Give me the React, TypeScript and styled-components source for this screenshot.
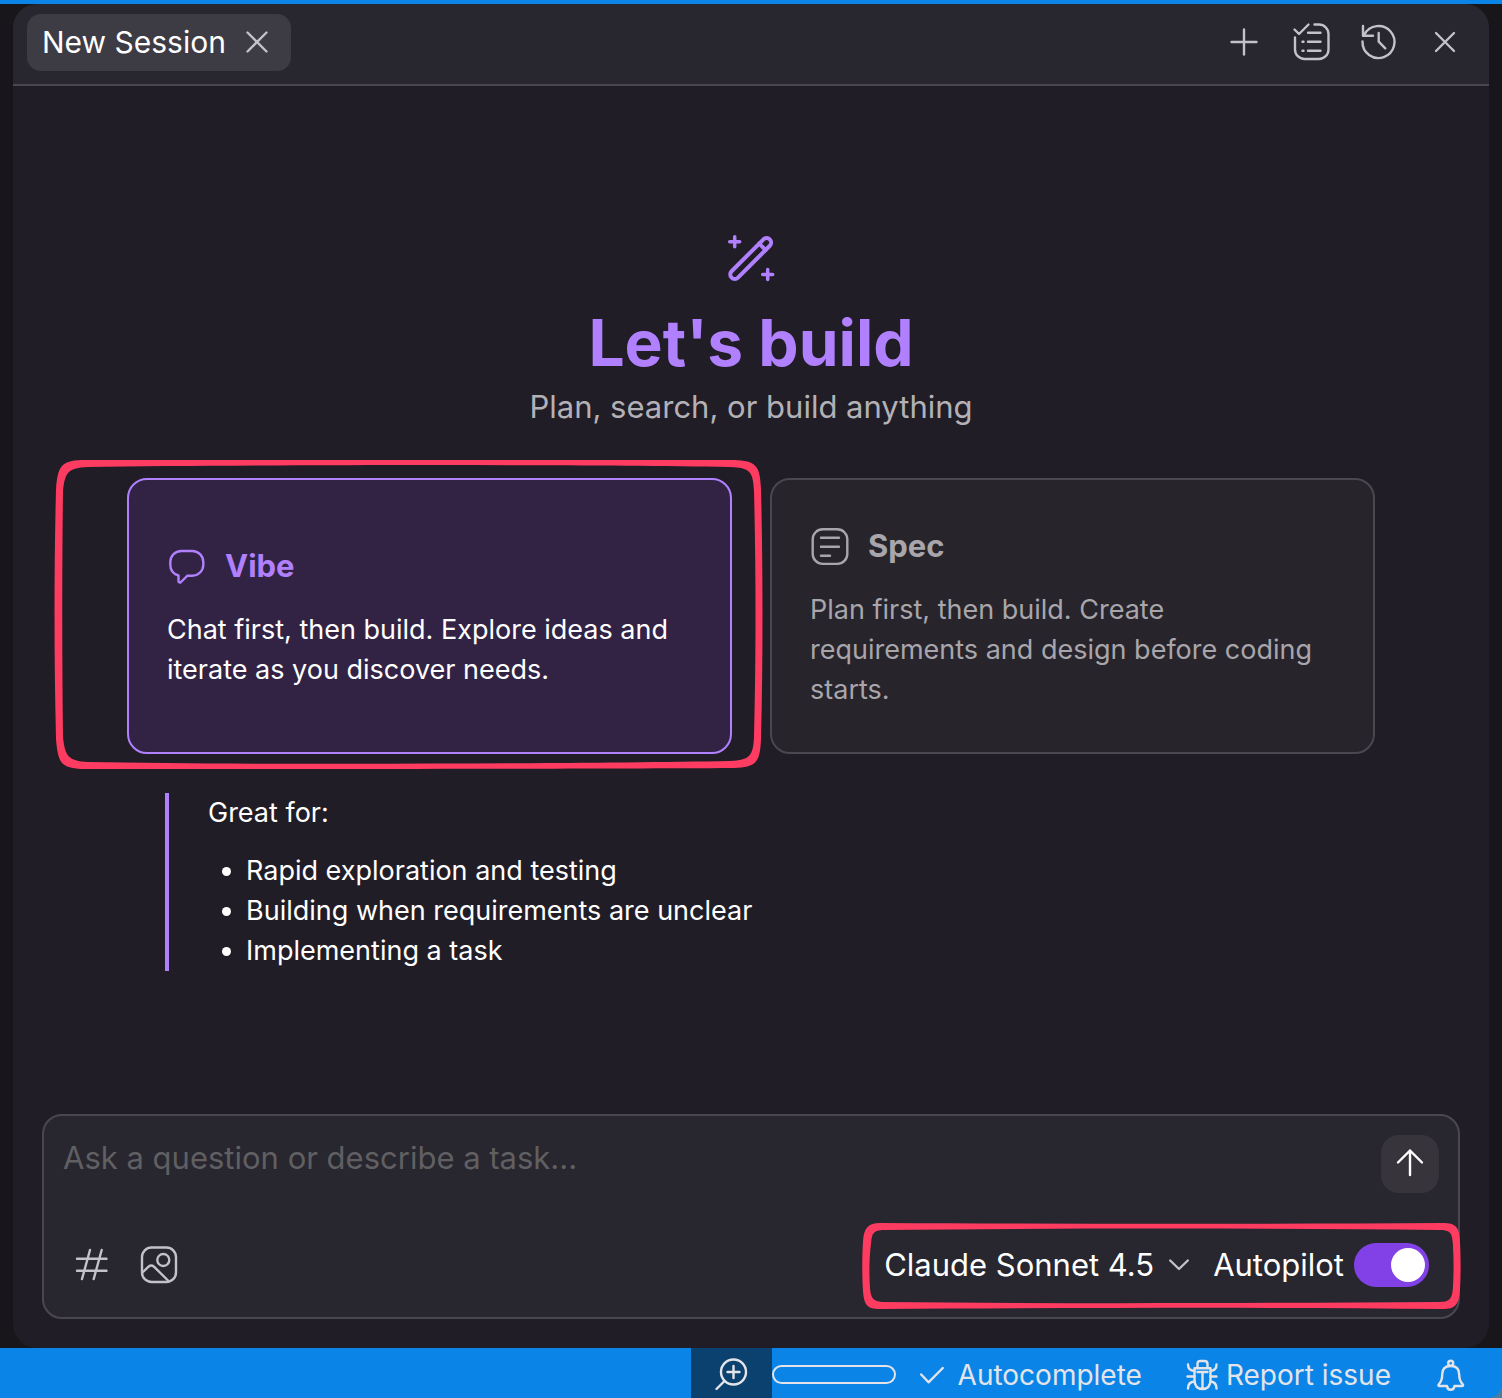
import React, { useState } from "react";
import styled, { createGlobalStyle } from "styled-components";

const color = {
  blue: "#0a84e6",
  frame: "#18161b",
  panel: "#211d26",
  raised: "#28262f",
  line: "#4a484e",
  accent: "#b080ff",
  text: "#ffffff",
  muted: "#a8a6ab",
  icon: "#c3c1c9",
  mark: "#fe3b61",
  status: "#e2e4ea",
};

const GlobalStyle = createGlobalStyle`
  *, *::before, *::after { box-sizing: border-box; }
  body { margin: 0; background: ${color.frame}; }
  button, input, textarea, select { font: inherit; color: inherit; }
`;

const Shell = styled.div`
  min-height: 100vh;
  display: flex;
  flex-direction: column;
  border-top: 4px solid ${color.blue};
  background: ${color.frame};
  color: ${color.text};
  font-family: Inter, "Liberation Sans", sans-serif;
  font-size: 27px;
  line-height: 40px;
`;

const Panel = styled.main`
  flex: 1;
  display: flex;
  flex-direction: column;
  margin: 0 13px;
  background: ${color.panel};
  border-radius: 24px;
  overflow: hidden;
`;

const Header = styled.header`
  display: flex;
  align-items: center;
  justify-content: space-between;
  padding: 9px 15px 13px 14px;
  background: ${color.raised};
  border-bottom: 2px solid ${color.line};
`;

const Tab = styled.div`
  display: flex;
  align-items: center;
  gap: 17px;
  height: 57px;
  padding: 0 20px 0 15px;
  border-radius: 14px;
  background: #3d3b43;
  font-size: 30px;
`;

const TabClose = styled.button`
  display: flex;
  padding: 0;
  border: 0;
  background: none;
  color: ${color.icon};
  cursor: pointer;
`;

const IconRow = styled.div`
  display: flex;
  gap: 9px;
`;

const IconButton = styled.button<{ $filled?: boolean }>`
  display: flex;
  flex: none;
  padding: 0;
  border: 0;
  border-radius: 18px;
  background: ${(p) => (p.$filled ? "#37343c" : "none")};
  color: ${(p) => (p.$filled ? color.text : color.icon)};
  cursor: pointer;
`;

const Welcome = styled.section`
  flex: 1;
  display: flex;
  flex-direction: column;
  align-items: center;
  justify-content: center;
  padding: 0 29px;
`;

const WandWrap = styled.div`
  display: flex;
  margin-bottom: 20px;
  color: ${color.accent};
`;

const Title = styled.h1`
  margin: 0 0 8px;
  color: ${color.accent};
  font-size: 64px;
  line-height: 72px;
  font-weight: 700;
`;

const Subtitle = styled.p`
  margin: 0 0 51px;
  color: #b3b1b6;
  font-size: 31px;
`;

const Modes = styled.div`
  width: 100%;
  max-width: 1248px;
`;

const CardGrid = styled.div`
  display: grid;
  grid-template-columns: 1fr 1fr;
  gap: 38px;
`;

const CardSlot = styled.div`
  position: relative;
  display: flex;
`;

const Card = styled.button<{ $active?: boolean }>`
  flex: 1;
  display: flex;
  flex-direction: column;
  justify-content: center;
  gap: 20px;
  padding: 42px 38px;
  border: 2px solid ${(p) => (p.$active ? color.accent : color.line)};
  border-radius: 20px;
  background: ${(p) => (p.$active ? "#322345" : "#27242b")};
  color: ${(p) => (p.$active ? color.text : color.muted)};
  text-align: left;
  cursor: pointer;
`;

const CardTitle = styled.span<{ $active?: boolean }>`
  display: flex;
  align-items: center;
  gap: 18px;
  color: ${(p) => (p.$active ? color.accent : color.muted)};
  font-size: 31px;
  line-height: 48px;
  font-weight: 700;
`;

const CardText = styled.span`
  max-width: 516px;
`;

const GreatFor = styled.div`
  margin: 39px 38px 0;
  padding-left: 39px;
  border-left: 4px solid ${color.accent};
`;

const Lead = styled.p`
  margin: 0 0 18px;
`;

const List = styled.ul`
  margin: 0;
  padding-left: 38px;
`;

const Composer = styled.form`
  margin: 0 29px 29px;
  padding: 19px;
  border: 2px solid ${color.line};
  border-radius: 20px;
  background: ${color.raised};
`;

const Entry = styled.div`
  display: flex;
  align-items: flex-start;
  gap: 19px;
  margin-bottom: 39px;
`;

const Prompt = styled.textarea`
  flex: 1;
  height: 58px;
  padding: 3px 0;
  border: 0;
  outline: 0;
  resize: none;
  background: none;
  font-size: 31px;
  line-height: 40px;
  &::placeholder {
    color: #605f62;
    opacity: 1;
  }
`;

const Tools = styled.div`
  display: flex;
  align-items: center;
  justify-content: space-between;
  padding-right: 10px;
`;

const Options = styled.div`
  position: relative;
  display: flex;
  align-items: center;
  gap: 24px;
  height: 66px;
  font-size: 31px;
`;

const ModelPicker = styled.div`
  display: grid;
  align-items: center;
  > * {
    grid-area: 1 / 1;
  }
  > svg {
    justify-self: end;
    pointer-events: none;
    color: ${color.icon};
  }
`;

const ModelSelect = styled.select`
  appearance: none;
  height: 40px;
  padding: 0 34px 0 0;
  border: 0;
  outline: 0;
  background: transparent;
  line-height: 40px;
`;

const SwitchLabel = styled.label`
  display: flex;
  align-items: center;
  gap: 10px;
`;

const Switch = styled.input`
  appearance: none;
  display: flex;
  width: 75px;
  height: 44px;
  margin: 0;
  padding: 5px 4px;
  border-radius: 22px;
  background: #57545d;
  cursor: pointer;
  &::before {
    content: "";
    width: 34px;
    height: 34px;
    border-radius: 50%;
    background: ${color.text};
  }
  &:checked {
    justify-content: flex-end;
    background: #8141e6;
  }
`;

const MarkSvg = styled.svg<{ $x: number; $y: number; $grow: number; $h: number }>`
  position: absolute;
  left: ${(p) => p.$x}px;
  top: ${(p) => p.$y}px;
  width: calc(100% + ${(p) => p.$grow}px);
  height: ${(p) => p.$h}px;
  fill: ${color.mark};
  pointer-events: none;
`;

const StatusEdge = styled.footer`
  background: #4b7d9f;
`;

const StatusBar = styled.div`
  display: flex;
  justify-content: flex-end;
  align-items: stretch;
  height: 50px;
  padding-right: 35px;
  border-bottom-right-radius: 14px;
  background: ${color.blue};
  color: ${color.status};
  font-size: 28px;
`;

const ZoomButton = styled.button`
  display: flex;
  align-items: center;
  justify-content: center;
  width: 81px;
  padding: 2px 0 0;
  border: 0;
  background: #0b416f;
  cursor: pointer;
`;

const Meter = styled.div`
  align-self: center;
  width: 124px;
  height: 19px;
  margin: 3px 24px 0 0;
  border: 2px solid ${color.status};
  border-radius: 10px;
`;

const StatusItems = styled.div`
  display: flex;
  gap: 44px;
  padding-top: 4px;
`;

const StatusItem = styled.button<{ $gap?: number }>`
  display: flex;
  align-items: center;
  gap: ${(p) => p.$gap ?? 0}px;
  padding: 0;
  border: 0;
  background: none;
  cursor: pointer;
`;

type IconProps = {
  w: number;
  h?: number;
  stroke?: number;
  children: React.ReactNode;
};

const Icon = ({ w, h = w, stroke = 2.4, children }: IconProps) => (
  <svg
    width={w}
    height={h}
    viewBox={`0 0 ${w} ${h}`}
    fill="none"
    stroke="currentColor"
    strokeWidth={stroke}
    strokeLinecap="round"
    strokeLinejoin="round"
    aria-hidden="true"
  >
    {children}
  </svg>
);

const CardMark = () => (
  <MarkSvg $x={-73} $y={-19} $grow={104} $h={311} viewBox="0 0 709 311" preserveAspectRatio="none" aria-hidden="true">
    <path
      fillRule="evenodd"
      d="M28 1 L680 1 C702 2 706 6 707 30 C709 110 709 200 707 280 C706 304 702 308 680 309 C500 310 200 310 28 310 C7 309 4 304 2 280 C0 200 0 110 2 30 C4 7 7 2 28 1Z M34 8 C200 6 500 5 676 8 C696 9 699 12 700 32 C702 110 702 200 700 278 C699 297 696 301 676 302 C500 305 200 306 34 303 C14 302 11 297 9 278 C8 200 8 110 9 32 C11 13 14 9 34 8Z"
    />
  </MarkSvg>
);

const OptionsMark = () => (
  <MarkSvg $x={-22} $y={-9} $grow={54} $h={86} viewBox="0 0 594 86" preserveAspectRatio="none" aria-hidden="true">
    <path
      fillRule="evenodd"
      d="M18 0 C200 1 400 1 576 0 C589 0 592 4 593 16 C594 34 594 54 593 68 C592 82 588 86 576 86 C400 84 200 85 18 86 C5 86 2 82 1 68 C0 54 0 34 1 18 C2 5 6 0 18 0Z M20 7 C200 5 400 5 572 7 C584 7 585 10 586 20 C587 36 587 52 586 66 C585 76 583 79 572 79 C400 80 200 81 20 79 C10 78 9 74 8 66 C7 52 7 36 9 20 C10 10 11 8 20 7Z"
    />
  </MarkSvg>
);

export default function App() {
  const [mode, setMode] = useState("vibe");
  const [autopilot, setAutopilot] = useState(true);

  return (
    <>
      <GlobalStyle />
      <Shell>
        <Panel>
          <Header>
            <Tab>
              <span>New Session</span>
              <TabClose type="button" aria-label="Close tab">
                <Icon w={28}>
                  <path d="M4.5 4.5 L23.5 23.5 M23.5 4.5 L4.5 23.5" />
                </Icon>
              </TabClose>
            </Tab>
            <IconRow>
              <IconButton type="button" aria-label="New session">
                <Icon w={58}>
                  <path d="M29 16.5 V41.5 M16.5 29 H41.5" />
                </Icon>
              </IconButton>
              <IconButton type="button" aria-label="Tasks">
                <Icon w={58}>
                  <path d="M32.5 11.5 H37 A9.5 9.5 0 0 1 46.5 21 V36.5 A9.5 9.5 0 0 1 37 46 H22.5 A9.5 9.5 0 0 1 13 36.5 V24.5" />
                  <path d="M12.5 16.5 L17 21 L26.5 11.5 M26 19.7 H38.5 M26 28.7 H38.5 M26 37.7 H38.5 M20.5 28.7 H21.5 M20.5 37.7 H21.5" />
                </Icon>
              </IconButton>
              <IconButton type="button" aria-label="History">
                <Icon w={58}>
                  <path d="M13.5 28.5 A16 16 0 1 0 15.3 21.6" />
                  <path d="M14 13 V22.7 H24 M29.7 20 V28.7 L36.3 35.3" />
                </Icon>
              </IconButton>
              <IconButton type="button" aria-label="Close panel">
                <Icon w={58}>
                  <path d="M20 20 L38 38 M38 20 L20 38" />
                </Icon>
              </IconButton>
            </IconRow>
          </Header>

          <Welcome>
            <WandWrap>
              <Icon w={58} stroke={4}>
                <g transform="translate(28.7 29.5) rotate(-45)">
                  <rect x="-27" y="-4.5" width="54" height="9" rx="4.5" />
                  <path d="M16.5 -4.5 V4.5" />
                </g>
                <path strokeWidth="3.5" d="M12.7 7.7 V17.7 M7.7 12.7 H17.7 M45.7 40.5 V50.5 M40.7 45.5 H50.7" />
              </Icon>
            </WandWrap>
            <Title>Let's build</Title>
            <Subtitle>Plan, search, or build anything</Subtitle>

            <Modes>
              <CardGrid>
                <CardSlot>
                  <Card type="button" $active={mode === "vibe"} onClick={() => setMode("vibe")}>
                    <CardTitle $active={mode === "vibe"}>
                      <Icon w={40}>
                        <path d="M14.3 5 H25.3 A11 11 0 0 1 36.3 16 V18.7 A11 11 0 0 1 25.3 29.7 H20.5 L14 36 C12.8 37 11.5 36.6 11.5 35 V29.5 C6.5 28 3.3 24 3.3 18.7 V16 A11 11 0 0 1 14.3 5Z" />
                      </Icon>
                      Vibe
                    </CardTitle>
                    <CardText>Chat first, then build. Explore ideas and iterate as you discover needs.</CardText>
                  </Card>
                  <CardMark />
                </CardSlot>
                <CardSlot>
                  <Card type="button" $active={mode === "spec"} onClick={() => setMode("spec")}>
                    <CardTitle $active={mode === "spec"}>
                      <Icon w={40}>
                        <rect x="2.7" y="3.3" width="34.6" height="34.6" rx="10" />
                        <path d="M11 11.7 H29 M11 20.7 H29 M11 29.7 H20" />
                      </Icon>
                      Spec
                    </CardTitle>
                    <CardText>Plan first, then build. Create requirements and design before coding starts.</CardText>
                  </Card>
                </CardSlot>
              </CardGrid>

              <GreatFor>
                <Lead>Great for:</Lead>
                <List>
                  <li>Rapid exploration and testing</li>
                  <li>Building when requirements are unclear</li>
                  <li>Implementing a task</li>
                </List>
              </GreatFor>
            </Modes>
          </Welcome>

          <Composer onSubmit={(e) => e.preventDefault()}>
            <Entry>
              <Prompt aria-label="Message" placeholder="Ask a question or describe a task..." />
              <IconButton type="submit" $filled aria-label="Send">
                <Icon w={58}>
                  <path d="M29 15.5 V40 M17 27.5 L29 15.5 L41 27.5" />
                </Icon>
              </IconButton>
            </Entry>
            <Tools>
              <IconRow>
                <IconButton type="button" aria-label="Add context">
                  <Icon w={58}>
                    <path d="M14 22.7 H43.5 M14 34.7 H43.5 M27 14 L19 43 M38.7 14 L30.7 43" />
                  </Icon>
                </IconButton>
                <IconButton type="button" aria-label="Add image">
                  <Icon w={58}>
                    <rect x="12" y="11.5" width="34" height="34.5" rx="9.5" />
                    <circle cx="33.3" cy="24" r="6" />
                    <path d="M13 36 L18.5 30.7 Q21.3 28.5 24 30.7 L38.5 45" />
                  </Icon>
                </IconButton>
              </IconRow>
              <Options>
                <ModelPicker>
                  <ModelSelect aria-label="Model">
                    <option>Claude Sonnet 4.5</option>
                  </ModelSelect>
                  <Icon w={20} h={12}>
                    <path d="M1.2 1.5 L10 10 L18.8 1.5" />
                  </Icon>
                </ModelPicker>
                <SwitchLabel>
                  Autopilot
                  <Switch
                    type="checkbox"
                    role="switch"
                    checked={autopilot}
                    onChange={(e) => setAutopilot(e.target.checked)}
                  />
                </SwitchLabel>
                <OptionsMark />
              </Options>
            </Tools>
          </Composer>
        </Panel>

        <StatusEdge>
          <StatusBar>
            <ZoomButton type="button" aria-label="Zoom in">
              <Icon w={34}>
                <circle cx="19.5" cy="15" r="12.5" />
                <path d="M19.5 9 V21 M13.5 15 H25.5 M10.5 24 L2.5 32" />
              </Icon>
            </ZoomButton>
            <Meter />
            <StatusItems>
              <StatusItem type="button" $gap={14}>
                <Icon w={24}>
                  <path d="M1.2 11.5 L8.5 19.3 L22.8 5" />
                </Icon>
                Autocomplete
              </StatusItem>
              <StatusItem type="button" $gap={8}>
                <Icon w={32}>
                  <path d="M11.5 8 V5 Q11.5 2 14.5 2 H18.5 Q21.5 2 21.5 5 V8" />
                  <path d="M8.5 9.3 H24.5 V20.5 Q24.5 30 16.5 30 Q8.5 30 8.5 20.5Z M11.5 13 H21.5 M16.5 13 V30" />
                  <path d="M2 5.5 Q2 11.5 8.5 12 M30.5 5.5 Q30.5 11.5 24.5 12 M1.5 17.5 H8.5 M24.5 17.5 H30.5 M2 29.5 Q2 23 8.5 22.5 M30.5 29.5 Q30.5 23 24.5 22.5" />
                </Icon>
                Report issue
              </StatusItem>
              <StatusItem type="button" aria-label="Notifications">
                <Icon w={32}>
                  <circle cx="15.7" cy="4.3" r="2.5" />
                  <path d="M4 25 C6.5 22.5 7.2 20 7.2 15.5 C7.2 10 10.5 7 15.7 7 C21 7 24.2 10 24.2 15.5 C24.2 20 25 22.5 27.5 25 Q29 27 26.8 27 H19.5 Q19 30.8 15.7 30.8 Q12.4 30.8 12 27 H4.8 Q2.5 27 4 25Z" />
                </Icon>
              </StatusItem>
            </StatusItems>
          </StatusBar>
        </StatusEdge>
      </Shell>
    </>
  );
}
